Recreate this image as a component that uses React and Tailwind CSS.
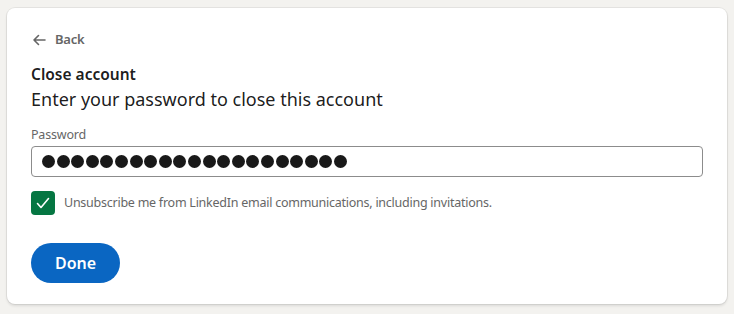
import { useState } from 'react';

const Arrow = () => (
  <svg width="16" height="16" viewBox="0 0 16 16" fill="none" className="text-[#666]">
    <path d="M14 8H3M7.5 3.5L3 8l4.5 4.5" stroke="currentColor" strokeWidth="1.6" strokeLinecap="round" strokeLinejoin="round" />
  </svg>
);

const Check = () => (
  <svg width="16" height="16" viewBox="0 0 16 16" fill="none">
    <path d="M2.5 8.5l3.5 4L13.5 3.5" stroke="white" strokeWidth="1.6" strokeLinecap="round" strokeLinejoin="round" />
  </svg>
);

/**
 * Close account confirmation card
 */
const App = () => {
  const [checked, setChecked] = useState(true);
  const dots = Array.from({ length: 21 });

  return (
    <div className="w-[734px] h-[314px] bg-[#f3f2ef] py-[8px] px-[7px] font-['Noto_Sans',sans-serif]">
      <div className="h-[296px] bg-white rounded-[8px] shadow-[0_0_0_1px_rgba(0,0,0,0.06),0_2px_3px_rgba(0,0,0,0.1)] px-[24px] pt-[22px]">
        {/* Back */}
        <button className="flex items-center gap-[8px] h-[20px] text-[13px] tracking-[-0.2px] font-semibold text-[#666]">
          <Arrow />
          <span>Back</span>
        </button>

        <h2 className="mt-[13px] text-[15.5px] font-semibold leading-[22px] text-black/90">Close account</h2>
        <p className="mt-[2px] text-[18px] leading-[24px] text-black/90">Enter your password to close this account</p>

        {/* Password */}
        <label className="block mt-[15px] text-[12.5px] tracking-[-0.2px] leading-[18px] text-[#666]">Password</label>
        <div className="mt-[2px] h-[31px] border border-[#8c8c8c] rounded-[4px] flex items-center gap-[1.6px] px-[10px]">
          {dots.map((_, i) => (
            <span key={i} className="w-[13px] h-[13px] rounded-full bg-[#191919]" />
          ))}
        </div>

        {/* Unsubscribe */}
        <div className="mt-[14px] flex items-center gap-[9px]">
          <button
            onClick={() => setChecked(!checked)}
            className={`w-[24px] h-[24px] rounded-[4px] flex items-center justify-center ${checked ? 'bg-[#057642]' : 'border border-[#666]'}`}
          >
            {checked && <Check />}
          </button>
          <span className="text-[12.5px] tracking-[-0.25px] text-[#666]">Unsubscribe me from LinkedIn email communications, including invitations.</span>
        </div>

        <button className="mt-[28px] w-[89px] h-[40px] rounded-full bg-[#0a66c2] text-white text-[16px] font-semibold">
          Done
        </button>
      </div>
    </div>
  );
};

export default App;
